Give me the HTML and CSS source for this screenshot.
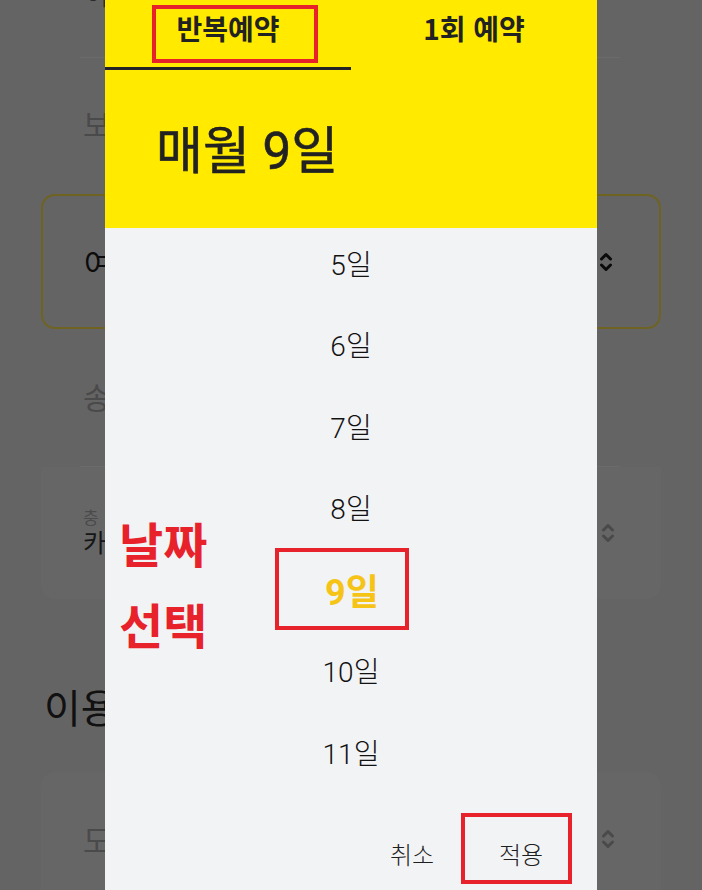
FILE: index.html
```html
<!DOCTYPE html>
<html lang="ko">
<head>
<meta charset="utf-8">
<title>반복예약</title>
<link rel="stylesheet" href="styles.css">
</head>
<body>
<div class="screen">
  <div class="page">
    <div class="field-top"><span class="top-text">아</span></div>
    <div class="label label-bo">보</div>
    <div class="card card-active">
      <span class="card-value">여</span>
      <svg class="chev chev-dark" viewBox="0 0 14 24" width="14" height="24"><path d="M2.5 9 L7 4.5 L11.5 9 M2.5 15 L7 19.5 L11.5 15" fill="none" stroke="currentColor" stroke-width="3" stroke-linecap="round" stroke-linejoin="round"/></svg>
    </div>
    <div class="label label-song">송</div>
    <div class="divider"></div>
    <div class="card card-soft card-charge">
      <div class="stack">
        <span class="small-label">충</span>
        <span class="stack-value">카</span>
      </div>
      <svg class="chev chev-dim" viewBox="0 0 14 24" width="14" height="24"><path d="M2.5 9 L7 4.5 L11.5 9 M2.5 15 L7 19.5 L11.5 15" fill="none" stroke="currentColor" stroke-width="3" stroke-linecap="round" stroke-linejoin="round"/></svg>
    </div>
    <div class="section-title">이용</div>
    <div class="card card-soft card-last">
      <span class="label-in">도</span>
      <svg class="chev chev-dim" viewBox="0 0 14 24" width="14" height="24"><path d="M2.5 9 L7 4.5 L11.5 9 M2.5 15 L7 19.5 L11.5 15" fill="none" stroke="currentColor" stroke-width="3" stroke-linecap="round" stroke-linejoin="round"/></svg>
    </div>
  </div>

  <div class="dialog">
    <div class="head">
      <div class="tabs">
        <div class="tab tab-active">반복예약<span class="mark mark-tab"></span></div>
        <div class="tab">1회 예약</div>
      </div>
      <div class="title">매월 9일</div>
    </div>
    <div class="list">
      <div class="list-inner">
        <div class="item">5일</div>
        <div class="item">6일</div>
        <div class="item">7일</div>
        <div class="item">8일</div>
        <div class="item item-selected"><span class="mark mark-item"></span>9일</div>
        <div class="item">10일</div>
        <div class="item">11일</div>
      </div>
    </div>
    <div class="actions">
      <div class="btn">취소</div>
      <div class="btn">적용<span class="mark mark-btn"></span></div>
    </div>
    <div class="note">날짜<br>선택</div>
  </div>
</div>
</body>
</html>
```
FILE: styles.css
```css
* { box-sizing: border-box; }
html, body { margin: 0; padding: 0; }
body {
  width: 702px;
  height: 890px;
  overflow: hidden;
  background: #646464;
  font-family: Roboto, "Noto Sans CJK KR", sans-serif;
}
.screen {
  position: relative;
  width: 702px;
  height: 890px;
  overflow: hidden;
}
.page {
  height: 890px;
  padding: 0 41px;
  display: flex;
  flex-direction: column;
}
.page > * { flex-shrink: 0; }
.field-top {
  height: 58px;
  margin: 0 41px 0 39px;
  border-bottom: 1px solid #6b6b6b;
  padding-left: 5px;
}
.top-text {
  display: block;
  font-size: 28px;
  line-height: 28px;
  margin-top: -18px;
  color: #2a2a2a;
}
.label {
  font-size: 30px;
  line-height: 36px;
  color: #4a4a4a;
  padding-left: 42px;
}
.label-bo { margin-top: 50px; }
.label-song { margin-top: 52px; }
.card {
  display: flex;
  align-items: center;
  justify-content: space-between;
  border-radius: 14px;
}
.card-active {
  margin-top: 50px;
  height: 135px;
  border: 2px solid #6f6322;
  padding: 0 46px 0 41px;
}
.card-value {
  font-size: 30px;
  color: #0c0c0c;
}
.chev { display: block; flex-shrink: 0; }
.chev-dark { color: #0a0a0a; }
.chev-dim { color: #4a4a4a; }
.divider {
  margin: 49px 41px 0 39px;
  border-top: 1px solid #6b6b6b;
}
.card-soft {
  background: #666666;
  padding: 0 46px 0 42px;
}
.card-charge {
  height: 132px;
  border-radius: 0 0 14px 14px;
}
.stack {
  display: flex;
  flex-direction: column;
}
.small-label {
  font-size: 17px;
  line-height: 22px;
  color: #4a4a4a;
}
.stack-value {
  font-size: 25px;
  line-height: 30px;
  color: #161616;
}
.section-title {
  margin-top: 87px;
  padding-left: 3px;
  font-size: 40px;
  line-height: 48px;
  color: #111;
}
.card-last {
  margin-top: 38px;
  height: 134px;
}
.label-in {
  font-size: 30px;
  color: #4a4a4a;
}

/* dialog */
.dialog {
  position: absolute;
  left: 105px;
  top: 0;
  width: 492px;
  height: 890px;
  background: #f2f3f5;
  display: flex;
  flex-direction: column;
}
.head {
  height: 228px;
  background: #ffea00;
  flex-shrink: 0;
  display: flex;
  flex-direction: column;
}
.tabs {
  display: flex;
  height: 70px;
}
.tab {
  position: relative;
  flex: 1;
  text-align: center;
  padding-top: 10px;
  font-family: "Noto Sans CJK KR", sans-serif;
  font-size: 28px;
  line-height: 36px;
  font-weight: 700;
  color: #222;
}
.tab-active { border-bottom: 3px solid #242424; }
.title {
  flex: 1;
  display: flex;
  align-items: center;
  padding: 0 0 4px 51px;
  font-size: 51px;
  font-weight: 400;
  color: #222;
  -webkit-text-stroke: 0.6px #222;
}
.list {
  height: 585px;
  overflow: hidden;
  flex-shrink: 0;
}
.list-inner { margin-top: -6px; }
.item {
  position: relative;
  height: 81.5px;
  display: flex;
  align-items: center;
  justify-content: center;
  font-size: 28px;
  font-weight: 300;
  color: #121212;
}
.item-selected {
  font-size: 36px;
  font-weight: 700;
  color: #f5c417;
  padding-left: 2px;
}
.actions {
  height: 77px;
  display: flex;
  justify-content: flex-end;
  gap: 21px;
  padding-right: 32px;
}
.btn {
  position: relative;
  width: 88px;
  height: 80px;
  display: flex;
  align-items: center;
  justify-content: center;
  font-size: 24px;
  font-weight: 300;
  color: #1e1e1e;
}
.mark {
  position: absolute;
  border: 4px solid #e8222b;
}
.mark-tab { left: 47px; top: 5px; width: 166px; height: 58px; }
.mark-item { left: 170px; top: 0; width: 134px; height: 82px; }
.mark-btn { left: -16px; top: 0; width: 111px; height: 71px; }
.note {
  position: absolute;
  left: 14px;
  top: 502px;
  font-family: "Noto Sans CJK KR", sans-serif;
  font-size: 48px;
  line-height: 81px;
  font-weight: 700;
  color: #e8222b;
  letter-spacing: 0;
}
```
